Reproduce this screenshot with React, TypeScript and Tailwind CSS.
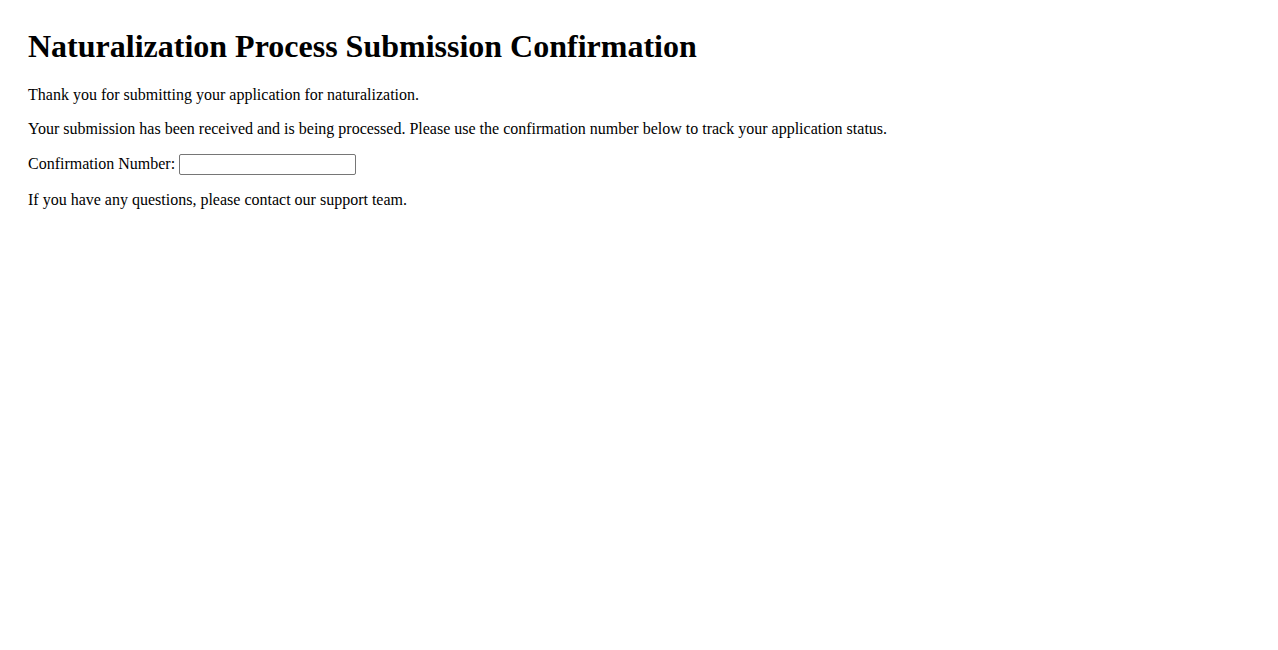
const App = () => {
  return (
    <div className="min-h-screen bg-white p-[8px] font-['Liberation_Serif','Times_New_Roman',serif] text-black">
      <div className="px-[20px]">
        <h1 className="mt-[20px] mb-[21.44px] text-[32px] font-bold leading-[normal]">
          Naturalization Process Submission Confirmation
        </h1>
        <p className="my-[16px] text-[16px] leading-[normal]">
          Thank you for submitting your application for naturalization.
        </p>
        <p className="my-[16px] text-[16px] leading-[normal]">
          Your submission has been received and is being processed. Please use the
          confirmation number below to track your application status.
        </p>
        <p className="my-[16px] text-[16px] leading-[normal]">
          Confirmation Number:{" "}
          <input
            type="text"
            className="w-[177px] h-[21px] rounded-[2px] border border-[#767676] bg-white px-[2px] py-[1px] align-baseline font-['Liberation_Sans',Arial,sans-serif] text-[13.33px] outline-none"
          />
        </p>
        <p className="my-[16px] text-[16px] leading-[normal]">
          If you have any questions, please contact our support team.
        </p>
      </div>
    </div>
  );
};

export default App;
